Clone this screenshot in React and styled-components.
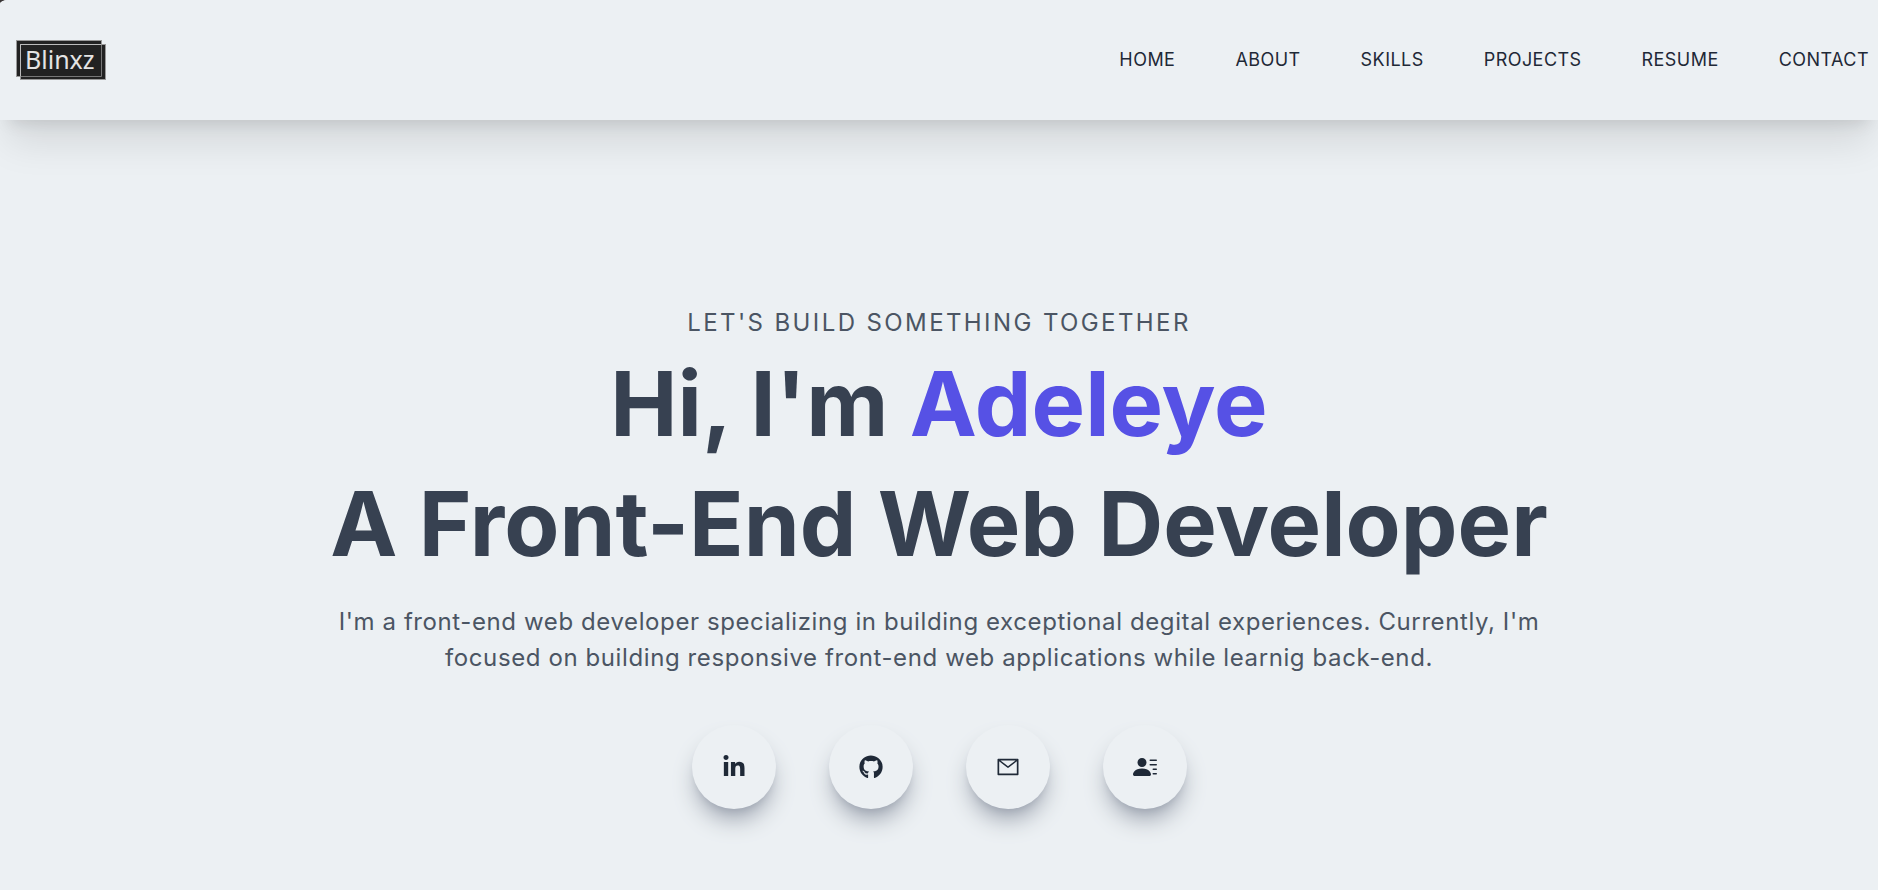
import React from "react";
import styled, { createGlobalStyle } from "styled-components";
import { FaLinkedinIn, FaGithub } from "react-icons/fa";
import { AiOutlineMail } from "react-icons/ai";
import { BsFillPersonLinesFill } from "react-icons/bs";

const GlobalStyle = createGlobalStyle`
  *, *::before, *::after { box-sizing: border-box; }
  html { background: #3a3636; }
  body {
    margin: 0;
    font-family: Inter, "Liberation Sans", sans-serif;
    font-size: 24px;
    font-weight: 400;
    line-height: 36px;
    color: #4b5563;
  }
`;

const Page = styled.div`
  display: flex;
  flex-direction: column;
  min-height: 100vh;
  overflow: hidden;
  background: #ecf0f3;
  border-top-left-radius: 8px 4px;
`;

const Header = styled.header`
  display: flex;
  align-items: center;
  justify-content: space-between;
  height: 120px;
  padding: 0 9px 0 16px;
  background: #ecf0f3;
  box-shadow: 0 30px 38px -8px rgba(0, 0, 0, 0.1), 0 12px 15px -9px rgba(0, 0, 0, 0.1);
`;

const LogoLink = styled.a`
  display: block;
  line-height: 0;
`;

const NavList = styled.ul`
  display: flex;
  gap: 60px;
  margin: 0;
  padding: 0;
  list-style: none;
`;

const NavLink = styled.a`
  display: block;
  font-size: 18px;
  line-height: 24px;
  letter-spacing: 0.025em;
  text-transform: uppercase;
  text-decoration: none;
  color: #1f2937;
`;

const Hero = styled.main`
  display: flex;
  flex: 1;
  flex-direction: column;
  align-items: center;
  padding: 185px 24px 80px;
  text-align: center;
`;

const Tagline = styled.p`
  margin: 0;
  letter-spacing: 0.1em;
  text-transform: uppercase;
`;

const Title = styled.h1`
  margin: 3px 0 20px;
  font-size: 90px;
  line-height: 120px;
  font-weight: 700;
  color: #374151;
`;

const Name = styled.span`
  color: #5651e5;
`;

const Intro = styled.p`
  max-width: 1220px;
  margin: 0;
  letter-spacing: 0.025em;
`;

const Socials = styled.div`
  display: flex;
  gap: 53px;
  margin-top: 49px;
`;

const SocialLink = styled.a`
  display: flex;
  padding: 30px;
  border-radius: 50%;
  color: #1f2937;
  box-shadow: 0 15px 23px -5px #9ca3af, 0 6px 9px -6px #9ca3af;
  background: #ecf0f3;
`;

const links = ["Home", "About", "Skills", "Projects", "Resume", "Contact"];

const socials = [
  { label: "LinkedIn", Icon: FaLinkedinIn },
  { label: "GitHub", Icon: FaGithub },
  { label: "Email", Icon: AiOutlineMail },
  { label: "Contact details", Icon: BsFillPersonLinesFill },
];

function Logo() {
  return (
    <svg width="90" height="40" viewBox="0 0 90 40" role="img" aria-label="Blinxz">
      <rect x="0.5" y="0.5" width="85" height="36" fill="#222" stroke="#999" />
      <rect x="4.5" y="4.5" width="85" height="35" fill="#222" stroke="#999" />
      <path d="M85.5 5V36.5H5" fill="none" stroke="#777" />
      <path d="M4.5 36V4.5H85" fill="none" stroke="#bbb" />
      <text
        x="9"
        y="29"
        fontFamily="'Noto Sans', sans-serif"
        fontSize="25"
        fontWeight="400"
        fill="#e4e4e4"
      >
        Blinxz
      </text>
    </svg>
  );
}

export default function App() {
  return (
    <>
      <GlobalStyle />
      <Page>
        <Header>
          <LogoLink href="#home">
            <Logo />
          </LogoLink>
          <nav aria-label="Main">
            <NavList>
              {links.map((name) => (
                <li key={name}>
                  <NavLink href={`#${name.toLowerCase()}`}>{name}</NavLink>
                </li>
              ))}
            </NavList>
          </nav>
        </Header>
        <Hero id="home">
          <Tagline>Let's build something together</Tagline>
          <Title>
            Hi, I'm <Name>Adeleye</Name>
            <br />A Front-End Web Developer
          </Title>
          <Intro>
            I'm a front-end web developer specializing in building exceptional degital experiences.
            Currently, I'm focused on building responsive front-end web applications while learnig
            back-end.
          </Intro>
          <Socials>
            {socials.map(({ label, Icon }) => (
              <SocialLink key={label} href="#contact" aria-label={label}>
                <Icon size={24} />
              </SocialLink>
            ))}
          </Socials>
        </Hero>
      </Page>
    </>
  );
}
